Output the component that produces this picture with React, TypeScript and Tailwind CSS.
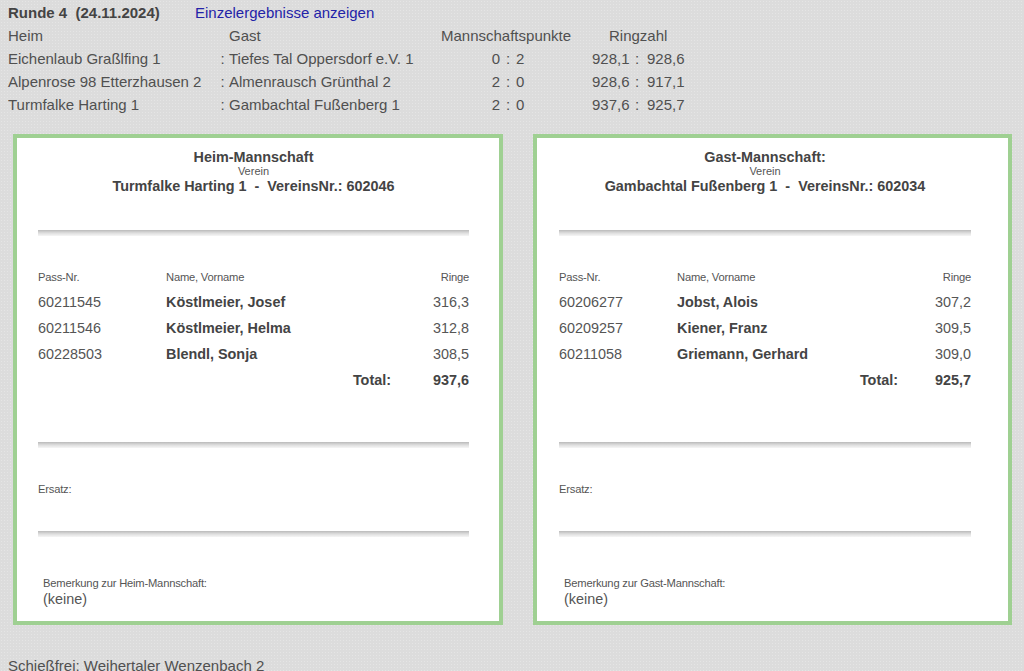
import React from 'react';

type Shooter = { pass: string; name: string; ringe: string };

type TeamCardProps = {
  title: string;
  club: string;
  shooters: Shooter[];
  total: string;
  remarkLabel: string;
  widthClass: string;
  padClass: string;
  passColClass: string;
  totalGapClass: string;
};

const matches = [
  { heim: 'Eichenlaub Graßlfing 1', gast: 'Tiefes Tal Oppersdorf e.V. 1', p1: '0', p2: '2', r1: '928,1', r2: '928,6' },
  { heim: 'Alpenrose 98 Etterzhausen 2', gast: 'Almenrausch Grünthal 2', p1: '2', p2: '0', r1: '928,6', r2: '917,1' },
  { heim: 'Turmfalke Harting 1', gast: 'Gambachtal Fußenberg 1', p1: '2', p2: '0', r1: '937,6', r2: '925,7' },
];

function Divider() {
  return <div className="h-[6px] w-full bg-linear-to-b from-[#bababa] via-[#dedede] to-[#f6f6f6]" />;
}

function TeamCard({
  title,
  club,
  shooters,
  total,
  remarkLabel,
  widthClass,
  padClass,
  passColClass,
  totalGapClass,
}: TeamCardProps) {
  return (
    <div className={`${widthClass} h-[491px] shrink-0 border-4 border-[#9fd092] bg-white`}>
      <div className={`${padClass} pt-[11px]`}>
        <div className="text-center">
          <div className="text-[14.4px] leading-[16px] font-bold text-[#444]">{title}</div>
          <div className="text-[11px] leading-[12px] text-[#555]">Verein</div>
          <div className="text-[14.4px] leading-[18px] font-bold text-[#444] whitespace-pre">{club}</div>
        </div>

        <div className="mt-[35px]">
          <Divider />
        </div>

        <div className="mt-[34px] flex text-[11.2px] leading-[14px] text-[#555] tracking-[-0.2px]">
          <div className={passColClass}>Pass-Nr.</div>
          <div className="flex-1">Name, Vorname</div>
          <div>Ringe</div>
        </div>

        <div className="mt-[5px] text-[14.4px] leading-[26px]">
          {shooters.map((s) => (
            <div key={s.pass} className="flex">
              <div className={`${passColClass} text-[#555]`}>{s.pass}</div>
              <div className="flex-1 font-bold text-[#444]">{s.name}</div>
              <div className="text-[#555]">{s.ringe}</div>
            </div>
          ))}
          <div className="flex justify-end font-bold text-[#444]">
            <div>Total:</div>
            <div className={`${totalGapClass} text-right`}>{total}</div>
          </div>
        </div>

        <div className="mt-[49px]">
          <Divider />
        </div>

        <div className="mt-[34px] text-[11.2px] leading-[14px] text-[#555] tracking-[-0.2px]">Ersatz:</div>

        <div className="mt-[35px]">
          <Divider />
        </div>

        <div className="mt-[39px] pl-[5px]">
          <div className="text-[11.2px] leading-[14px] text-[#555] tracking-[-0.2px]">{remarkLabel}</div>
          <div className="text-[14.4px] leading-[18px] text-[#555]">(keine)</div>
        </div>
      </div>
    </div>
  );
}

export default function App() {
  return (
    <div className="min-h-[671px] w-full overflow-hidden bg-[#dcdcdc] bg-[image:radial-gradient(circle,#e5e5e5_0.8px,transparent_0.9px)] bg-[length:3px_3px] font-['Liberation_Sans',Arial,sans-serif] text-[15px] text-[#505050]">
      <div className="pt-[2px] pl-[8px] leading-[23px]">
        <div className="flex leading-[22px]">
          <span className="w-[187px] font-bold text-[#444] whitespace-pre">Runde 4  (24.11.2024)</span>
          <span className="text-[#2323a8]">Einzelergebnisse anzeigen</span>
        </div>
        <div className="flex">
          <div className="w-[221px]">Heim</div>
          <div className="w-[212px]">Gast</div>
          <div className="w-[167px]">Mannschaftspunkte</div>
          <div className="pl-[1px]">Ringzahl</div>
        </div>
        {matches.map((m) => (
          <div key={m.heim} className="flex">
            <div className="w-[208px]">{m.heim}</div>
            <div className="w-[13px] text-center">:</div>
            <div className="w-[212px]">{m.gast}</div>
            <div className="flex w-[151px]">
              <span className="w-[59px] text-right">{m.p1}</span>
              <span className="w-[16px] text-center">:</span>
              <span className="w-[30px]">{m.p2}</span>
            </div>
            <div className="flex">
              <span className="w-[42px]">{m.r1}</span>
              <span className="w-[13px] pl-[1px]">:</span>
              <span>{m.r2}</span>
            </div>
          </div>
        ))}
      </div>

      <div className="mt-[18px] flex gap-[30px] pl-[13px]">
        <TeamCard
          title="Heim-Mannschaft"
          club="Turmfalke Harting 1  -  VereinsNr.: 602046"
          shooters={[
            { pass: '60211545', name: 'Köstlmeier, Josef', ringe: '316,3' },
            { pass: '60211546', name: 'Köstlmeier, Helma', ringe: '312,8' },
            { pass: '60228503', name: 'Blendl, Sonja', ringe: '308,5' },
          ]}
          total="937,6"
          remarkLabel="Bemerkung zur Heim-Mannschaft:"
          widthClass="w-[490px]"
          padClass="pl-[21px] pr-[30px]"
          passColClass="w-[128px]"
          totalGapClass="w-[78px]"
        />
        <TeamCard
          title="Gast-Mannschaft:"
          club="Gambachtal Fußenberg 1  -  VereinsNr.: 602034"
          shooters={[
            { pass: '60206277', name: 'Jobst, Alois', ringe: '307,2' },
            { pass: '60209257', name: 'Kiener, Franz', ringe: '309,5' },
            { pass: '60211058', name: 'Griemann, Gerhard', ringe: '309,0' },
          ]}
          total="925,7"
          remarkLabel="Bemerkung zur Gast-Mannschaft:"
          widthClass="w-[479px]"
          padClass="pl-[22px] pr-[37px]"
          passColClass="w-[118px]"
          totalGapClass="w-[73px]"
        />
      </div>

      <div className="mt-[29px] pl-[8px] leading-[23px]">Schießfrei: Weihertaler Wenzenbach 2</div>
    </div>
  );
}
